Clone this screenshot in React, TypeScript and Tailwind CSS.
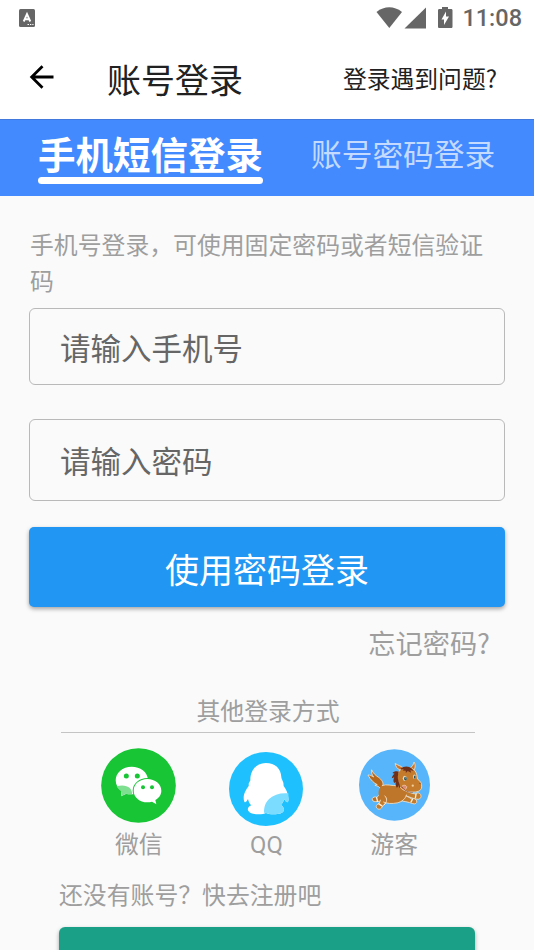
import React, { useState } from "react";

const WeChatIcon: React.FC = () => (
  <svg viewBox="36 23 225 225" className="mt-[15px] size-[75px]">
    <circle cx="148.500" cy="135.500" r="112" fill="#18c535" />
    <path
      d="M128 79C101 79 80 97 80 120c0 14 7 25 18 33l-2 15 16-8c8 2 14 2 22 2 5-1 6-6 5-12 3-24 17-33 38-33C175 94 154 79 128 79Z"
      fill="#fff"
    />
    <path
      d="M83 138c13-4 30-4 40 6 5 6 7 12 6 18-8 0-14 0-18-2l-15 8 2-15c-7-4-12-9-15-15Z"
      fill="#7fdf90"
    />
    <ellipse cx="175" cy="151" rx="44" ry="38" fill="#18c535" />
    <path
      d="M175 116c-23 0-41 15-41 35s18 35 41 35c5 0 10-1 14-2l13 8-3-13c11-6 18-16 18-28 0-20-19-35-42-35Z"
      fill="#fff"
    />
    <g fill="#18c535">
      <circle cx="112" cy="107" r="7.500" />
      <circle cx="145" cy="107" r="7.500" />
      <circle cx="162" cy="141" r="6" />
      <circle cx="189" cy="141" r="6" />
    </g>
  </svg>
);

const QQIcon: React.FC = () => (
  <svg viewBox="36 36 222 222" className="mt-[19px] size-[74px]">
    <circle cx="147" cy="147" r="111" fill="#1ec1fe" />
    <path
      d="M146 69c-29 0-46 23-46 51 0 3-2 5-4 8-2 4 0 7-1 10-7 9-15 23-15 35 0 8 2 14 4 14 3 0 7-6 9-10 2 8 5 15 10 19-8 3-12 9-10 15 3 9 17 12 31 12 11 0 19-2 23-4 4 2 12 4 23 4 16 0 28-3 31-12 1-6-3-12-9-16 5-6 8-12 10-18 2 5 6 10 9 10 3-1 4-6 3-14-1-13-7-26-14-35-1-3 1-8-4-17-1-3-3-6-3-10-1-25-18-42-47-42Z"
      fill="#fff"
    />
    <path
      d="M214 160c-24-2-44 4-57 16-12 11-16 25-16 42l7 1c5 2 12 4 22 4 16 0 28-3 31-12 1-6-3-12-9-16 5-6 8-12 10-18 2 5 6 10 9 10 4-2 4-12 3-27Z"
      fill="#7bdcff"
    />
  </svg>
);

const HorseIcon: React.FC = () => (
  <svg viewBox="41 27 214 216" className="mt-[16px] h-[72px] w-[71px]">
    <ellipse cx="148" cy="135" rx="107" ry="108" fill="#56b5fb" />
    <g stroke="#f6e3c8" strokeWidth="2.500" strokeLinejoin="round">
      {/* tail */}
      <path
        d="M107 150c-3-10-9-12-18-14 3-2 5-2 7-2-9-4-20-14-28-29 6 0 11 2 17 6-5-7-7-13-6-22 5 11 12 17 21 23 10 7 15 16 13 24-3 5-4 8-6 14Z"
        fill="#b5671c"
      />
      {/* hind legs */}
      <path
        d="M107 154c-3 8-6 14-12 18-6-2-12-1-14 4-1 6 4 10 10 9 8 0 15-1 19-4Z"
        fill="#b97028"
      />
      <path
        d="M112 163c-4 11-7 22-12 29-6 1-9 7-6 12 4 6 12 5 15 0 5-9 14-15 21-26Z"
        fill="#c27a2b"
      />
      {/* front legs */}
      <path
        d="M181 153c10 3 20 8 30 9 5-5 13-4 16 2 3 7-1 14-8 14-13 0-26-8-39-11Z"
        fill="#c27a2b"
      />
      <path
        d="M165 160c12 5 25 11 35 17 5-3 13 0 15 6 2 7-6 11-12 8-14-5-27-7-42-9Z"
        fill="#c27a2b"
      />
      {/* body */}
      <path
        d="M110 137c14-6 30 1 46 0 16 2 28 10 28 22 0 14-12 26-28 30-19 4-38 2-48-7-9-10-13-36 2-45Z"
        fill="#be762a"
        stroke="none"
      />
      <path d="M110 137c14-6 30 1 46 0M184 164c-2 12-14 22-28 25-16 3-31 2-42-3" fill="none" />
      {/* ears and head */}
      <path d="M165 90c-9-4-14-11-15-20 8 6 18 7 24 14Z" fill="#cc742b" />
      <path d="M196 83c6-4 9-10 11-17 6 10 3 20-2 27Z" fill="#cc742b" />
      <path
        d="M161 94c11-13 36-16 48-3 6 7 7 17 8 26 8 5 14 13 13 24-1 12-15 17-29 15-21-1-37-9-42-25-3-12-5-26 2-37Z"
        fill="#c47b2c"
      />
    </g>
    {/* mane */}
    <path
      d="M157 94c-6-1-12 1-15 5l6 2c-5 4-8 9-8 14l7-3c-3 7-3 13 0 17l5-3c-2 8 0 13 3 17 3-1 4-4 4-7 2 4 3 7 6 9 1-8-3-13-5-21-3-11-2-20 1-30Z"
      fill="#70311b"
    />
    <path
      d="M166 86c11-9 24-9 35 0l4 7-9-3 2 8-10-5-6 6 0-7-9-1 3-4-8 2Z"
      fill="#70311b"
    />
    <ellipse cx="179" cy="115" rx="6" ry="8" fill="#dfdcc4" />
    <ellipse cx="181" cy="116" rx="4" ry="5.500" fill="#28505a" />
    <circle cx="182" cy="114" r="1.500" fill="#fff" />
    <ellipse cx="208" cy="110" rx="4" ry="7" fill="#dfdcc4" />
    <ellipse cx="209" cy="111" rx="2.500" ry="5" fill="#28505a" />
    <path d="M170 139c5-5 12-4 15 1-1 7-5 11-10 9" fill="#dc8d78" stroke="#f8d6b8" strokeWidth="2" />
    <path d="M170 140c8 13 21 17 33 17" fill="none" stroke="#7c351b" strokeWidth="2" />
    <circle cx="203" cy="137" r="3.500" fill="#f3cf9b" />
    <circle cx="225" cy="130" r="2" fill="#8a451d" />
    <g stroke="#fff1dc" strokeWidth="4" fill="none" strokeLinecap="round">
      <path d="M94 173l3 11" />
      <path d="M101 192l9 6" />
      <path d="M213 162l-2 11" />
      <path d="M202 178l-4 8" />
      <path d="M119 168c8 8 7 18-2 27" strokeWidth="2.500" />
    </g>
  </svg>
);

const PROVIDERS = [
  { name: "微信", Icon: WeChatIcon },
  { name: "QQ", Icon: QQIcon },
  { name: "游客", Icon: HorseIcon },
];

const StatusBar: React.FC = () => (
  <div className="flex h-9 items-center justify-between pr-3 pl-[19px]">
    <svg viewBox="0 0 16 18" className="h-[18px] w-4">
      <rect width="16" height="18" rx="1.500" fill="#666" />
      <path d="M4.700 12.500 8 5l3.300 7.500M5.800 10.200h4.400" fill="none" stroke="#fff" strokeWidth="1.900" />
      <path d="M8.500 15.500h1.500m1 0h1.300m1 0h1.200" stroke="#fff" strokeWidth="1" />
    </svg>
    <div className="flex items-center text-[#666]">
      <svg viewBox="0 0 80 24" className="h-6 w-20" fill="currentColor">
        <path d="M.5 6C8.500-.2 18-.2 26 6L13.300 22Z" />
        <path d="M50 1.500v21H28.500Z" />
        <path
          fillRule="evenodd"
          d="M66 1h6v2h3c1 0 1.500.5 1.500 1.500v16c0 1-.5 1.500-1.500 1.500H63.500c-1 0-1.500-.5-1.500-1.500v-16C62 3.500 62.500 3 63.500 3H66Zm4 4.500-4.500 8H68V19l5-8.500h-3Z"
        />
      </svg>
      <span className="ml-[6px] font-[Roboto] text-[23.500px] leading-6 font-medium">11:08</span>
    </div>
  </div>
);

const App: React.FC = () => {
  const [tab, setTab] = useState<"sms" | "password">("sms");

  return (
    <div className="flex h-[950px] w-[534px] flex-col overflow-hidden bg-[#fafafa] font-['Noto_Sans_CJK_SC',sans-serif] text-[#9e9e9e]">
      <header className="h-[119px] shrink-0 bg-white text-[#212121]">
        <StatusBar />
        <div className="flex h-[83px] items-center pr-[37px] pl-[29px]">
          <button className="mb-0.5">
            <svg viewBox="0 0 26 26" className="size-[26px]" fill="none" stroke="#000" strokeWidth="2.800">
              <path d="M24.500 13H3M13.500 2.200 2.700 13l10.800 10.800" />
            </svg>
          </button>
          <h1 className="mt-0.5 ml-[52px] text-[34px] leading-[40px]">账号登录</h1>
          <a className="ml-auto text-[23.800px] leading-8">登录遇到问题?</a>
        </div>
      </header>

      <nav className="flex h-[77px] shrink-0 items-start border-t border-[#4279dc] bg-[#448aff] pl-[38px] whitespace-nowrap text-white">
        <button
          onClick={() => setTab("sms")}
          className={tab === "sms" ? "mt-[14px] text-[37.500px] leading-[38px] font-bold" : "mt-[14px] text-[30.700px] leading-[38px] text-white/70"}
        >
          手机短信登录
          {tab === "sms" && <span className="mt-[5px] block h-[7px] rounded-full bg-white" />}
        </button>
        <button
          onClick={() => setTab("password")}
          className={tab === "password" ? "mt-[14px] ml-12 text-[37.500px] leading-[38px] font-bold" : "mt-[14px] ml-12 text-[30.700px] leading-[38px] text-white/70"}
        >
          账号密码登录
          {tab === "password" && <span className="mt-[5px] block h-[7px] rounded-full bg-white" />}
        </button>
      </nav>

      <main className="flex flex-col px-[29px] pt-[30px]">
        <p className="pl-px text-[23.850px] leading-[36px]">手机号登录，可使用固定密码或者短信验证码</p>
        <input
          placeholder="请输入手机号"
          className="mt-2.5 h-[77px] rounded-[6px] border border-[#b9b9b9] px-[30px] text-[30.500px] placeholder:text-[#666]"
        />
        <input
          type="password"
          placeholder="请输入密码"
          className="mt-[34px] h-[82px] rounded-[6px] border border-[#b9b9b9] px-[30px] text-[30.500px] placeholder:text-[#666]"
        />
        <button className="mt-[26px] h-20 rounded-[5px] bg-[#2196f3] pt-0.5 text-[34px] text-white shadow-[0_2px_4px_rgba(0,0,0,0.35)]">
          使用密码登录
        </button>
        <a className="mt-[17px] mr-[15px] self-end text-[27.200px] leading-9">忘记密码?</a>

        <section className="mr-[30px] ml-8 flex flex-col">
          <h2 className="mt-[32px] border-b border-[#c4c4c4] pb-1 text-center text-[23.850px] leading-[36px]">
            其他登录方式
          </h2>
          <div className="ml-[14px] grid w-[383px] grid-cols-3">
            {PROVIDERS.map(({ name, Icon }) => (
              <button key={name} className="flex flex-col items-center">
                <span className="h-[92px]">
                  <Icon />
                </span>
                <span className="font-[Roboto,'Noto_Sans_CJK_SC',sans-serif] text-[23.850px] leading-10">{name}</span>
              </button>
            ))}
          </div>
        </section>

        <p className="mt-[11px] ml-[30px] text-[23.850px] leading-9">还没有账号？快去注册吧</p>
        <button className="mx-[30px] mt-[15px] h-20 rounded-[6px] bg-[#1aa086] shadow-[0_2px_4px_rgba(0,0,0,0.35)]" />
      </main>
    </div>
  );
};

export default App;
